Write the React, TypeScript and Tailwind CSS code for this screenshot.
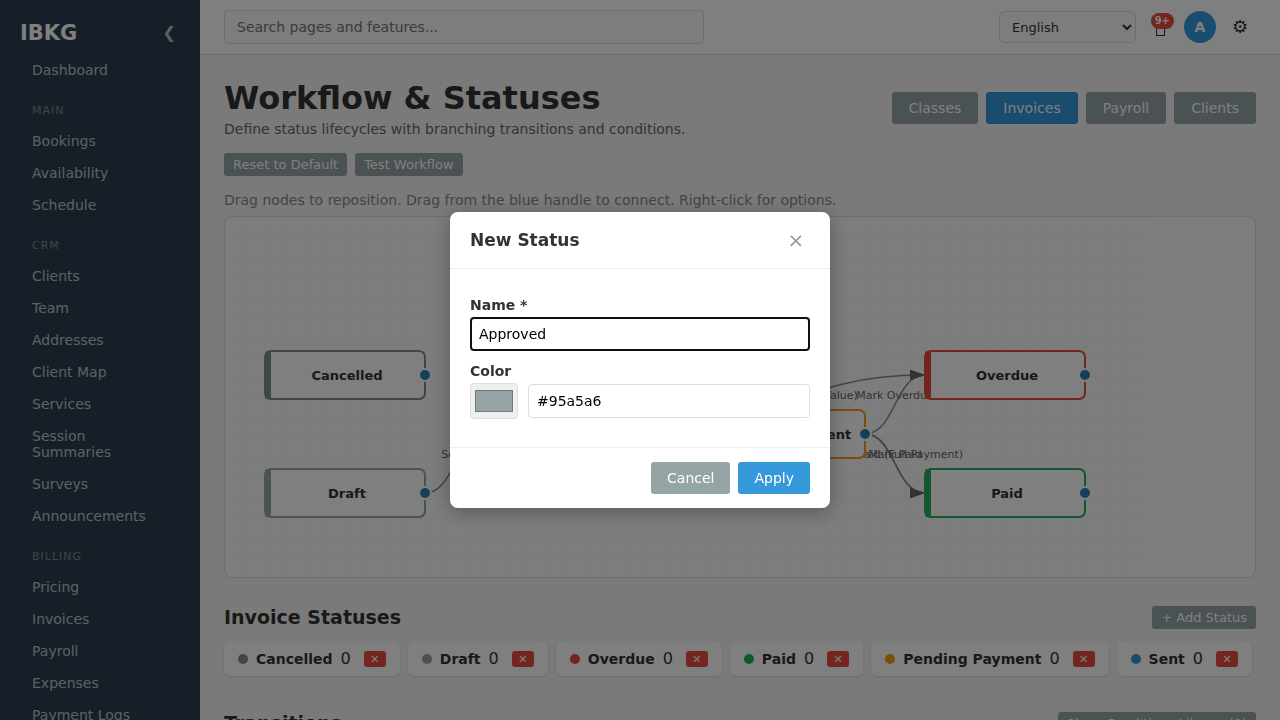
import { useState } from "react";

type Status = { name: string; color: string; count: number };
type FlowNode = { name: string; color: string; x: number; y: number };
type FlowEdge = {
  from: [number, number];
  to: [number, number];
  label: string;
};

const navSections = [
  { title: "", items: ["Dashboard"] },
  { title: "Main", items: ["Bookings", "Availability", "Schedule"] },
  {
    title: "CRM",
    items: [
      "Clients",
      "Team",
      "Addresses",
      "Client Map",
      "Services",
      "Session Summaries",
      "Surveys",
      "Announcements",
    ],
  },
  {
    title: "Billing",
    items: ["Pricing", "Invoices", "Payroll", "Expenses", "Payment Logs"],
  },
];

const tabs = ["Classes", "Invoices", "Payroll", "Clients"];

const statuses: Status[] = [
  { name: "Cancelled", color: "#7f8c8d", count: 0 },
  { name: "Draft", color: "#95a5a6", count: 0 },
  { name: "Overdue", color: "#e74c3c", count: 0 },
  { name: "Paid", color: "#27ae60", count: 0 },
  { name: "Pending Payment", color: "#f39c12", count: 0 },
  { name: "Sent", color: "#3498db", count: 0 },
];

const NODE_W = 160;
const NODE_H = 48;

const nodes: FlowNode[] = [
  { name: "Cancelled", color: "#7f8c8d", x: 40, y: 134 },
  { name: "Draft", color: "#95a5a6", x: 40, y: 252 },
  { name: "Sent", color: "#3498db", x: 260, y: 193 },
  { name: "Pending Payment", color: "#f39c12", x: 480, y: 193 },
  { name: "Overdue", color: "#e74c3c", x: 700, y: 134 },
  { name: "Paid", color: "#27ae60", x: 700, y: 252 },
];

const edges: FlowEdge[] = [
  { from: [200, 276], to: [260, 217], label: "Send" },
  { from: [420, 217], to: [700, 158], label: "Mark Overdue (Due Value)" },
  { from: [640, 217], to: [700, 158], label: "Mark Overdue" },
  { from: [640, 217], to: [700, 276], label: "Mark Paid" },
  { from: [640, 217], to: [700, 276], label: "Mark Paid (Full Payment)" },
];

function Sidebar() {
  return (
    <aside className="w-[200px] shrink-0 overflow-hidden bg-[#2c3e50] text-[#bdc3c7]">
      <div className="flex h-[54px] items-center justify-between pl-5 pr-6 pt-3">
        <span className="text-[21px] leading-6 font-bold text-white">IBKG</span>
        <button type="button" aria-label="Collapse sidebar" className="text-base leading-5">
          ❮
        </button>
      </div>
      <nav>
        {navSections.map((section) => (
          <div key={section.title}>
            {section.title && (
              <h3 className="px-8 pb-[7px] pt-[17px] text-[11px] leading-[15px] tracking-[1px] text-[#7f8c8d] uppercase">
                {section.title}
              </h3>
            )}
            <ul>
              {section.items.map((item) => (
                <li key={item}>
                  <a href="#" className="block py-2 pl-8 pr-10 text-sm leading-4">
                    {item}
                  </a>
                </li>
              ))}
            </ul>
          </div>
        ))}
      </nav>
    </aside>
  );
}

function TopBar() {
  return (
    <header className="flex h-[55px] shrink-0 items-center justify-between border-b border-[#ddd] bg-white px-6">
      <input
        type="search"
        aria-label="Search"
        placeholder="Search pages and features..."
        className="h-[34px] w-[480px] rounded border border-[#ddd] bg-[#fafafa] px-3 text-sm placeholder:text-[#757575]"
      />
      <div className="flex items-center">
        <select
          aria-label="Language"
          className="h-8 w-[137px] rounded-md border border-[#ddd] bg-[#fafafa] px-2 text-[13px] text-[#333]"
        >
          <option>English</option>
          <option>Français</option>
        </select>
        <button
          type="button"
          aria-label="Notifications"
          className="relative flex h-8 w-12 items-end justify-center pb-[7px]"
        >
          <span className="h-[14px] w-[9px] border border-[#333]" />
          <span className="absolute right-[10px] top-[2px] rounded-full bg-[#e74c3c] px-1 text-[10px] leading-4 font-bold text-white">
            9+
          </span>
        </button>
        <button
          type="button"
          aria-label="Account"
          className="size-8 rounded-full bg-[#3498db] text-sm font-bold text-white"
        >
          A
        </button>
        <button type="button" aria-label="Settings" className="ml-2 w-8 text-lg">
          ⚙
        </button>
      </div>
    </header>
  );
}

function SmallButton({ children }: { children: React.ReactNode }) {
  return (
    <button
      type="button"
      className="rounded-[3px] bg-[#95a5a6] px-[9px] py-1 text-[13px] leading-[15px] text-white"
    >
      {children}
    </button>
  );
}

function FlowCanvas() {
  return (
    <div className="mt-2 overflow-hidden rounded-lg border border-[#ddd] bg-[#fafafa]">
      <svg width="920" height="360" className="block">
        <defs>
          <pattern id="grid" width="20" height="20" patternUnits="userSpaceOnUse">
            <path d="M 20 0 L 0 0 0 20" fill="none" stroke="#f0f0f0" strokeWidth="1" />
          </pattern>
          <marker
            id="arrow"
            markerWidth="10"
            markerHeight="7"
            refX="10"
            refY="3.5"
            orient="auto"
          >
            <polygon points="0 0, 10 3.5, 0 7" fill="#666" />
          </marker>
        </defs>
        <rect width="920" height="360" fill="url(#grid)" />
        {edges.map(({ from, to, label }) => {
          const midX = (from[0] + to[0]) / 2;
          const midY = (from[1] + to[1]) / 2;
          return (
            <g key={`${label}-${from[0]}`}>
              <path
                d={`M ${from[0]} ${from[1]} C ${midX} ${from[1]}, ${midX} ${to[1]}, ${to[0]} ${to[1]}`}
                fill="none"
                stroke="#888"
                strokeWidth="1.5"
                markerEnd="url(#arrow)"
              />
              <text x={midX} y={midY - 6} textAnchor="middle" fontSize="11" fill="#666">
                {label}
              </text>
            </g>
          );
        })}
        {nodes.map((node) => (
          <g key={node.name}>
            <rect
              x={node.x}
              y={node.y}
              width={NODE_W}
              height={NODE_H}
              rx="6"
              fill="#fff"
              stroke={node.color}
              strokeWidth="2"
            />
            <rect x={node.x} y={node.y} width="6" height={NODE_H} rx="2" fill={node.color} />
            <text
              x={node.x + NODE_W / 2 + 2}
              y={node.y + NODE_H / 2 + 5}
              textAnchor="middle"
              fontSize="13"
              fontWeight="bold"
              fill="#333"
            >
              {node.name}
            </text>
            <circle
              cx={node.x + NODE_W}
              cy={node.y + NODE_H / 2}
              r="6"
              fill="#2980b9"
              stroke="#fff"
              strokeWidth="2"
            />
          </g>
        ))}
      </svg>
    </div>
  );
}

function StatusCard({ status }: { status: Status }) {
  return (
    <li className="flex h-[35px] items-center gap-2 rounded-md bg-white px-[14px] shadow-sm">
      <span
        className="size-[10px] rounded-full"
        style={{ backgroundColor: status.color }}
      />
      <span className="text-sm font-bold">{status.name}</span>
      <span className="text-base">{status.count}</span>
      <button
        type="button"
        aria-label={`Delete ${status.name}`}
        className="ml-[5px] h-4 w-[22px] rounded-[3px] bg-[#e74c3c] pt-px text-[11px] leading-[15px] text-white"
      >
        ✕
      </button>
    </li>
  );
}

function NewStatusDialog({ onClose }: { onClose: () => void }) {
  const [name, setName] = useState("Approved");
  const [color, setColor] = useState("#95a5a6");

  return (
    <div className="fixed inset-0 z-10 flex items-center justify-center bg-black/50">
      <form
        role="dialog"
        aria-labelledby="dialog-title"
        className="w-[380px] rounded-lg bg-white shadow-[0_4px_20px_rgba(0,0,0,0.3)]"
        onSubmit={(event) => {
          event.preventDefault();
          onClose();
        }}
      >
        <div className="flex h-[57px] items-center justify-between border-b border-[#eee] px-5">
          <h2 id="dialog-title" className="text-[17px] leading-5 font-bold">
            New Status
          </h2>
          <button
            type="button"
            aria-label="Close"
            className="w-7 text-xl leading-7 text-[#999]"
            onClick={onClose}
          >
            ×
          </button>
        </div>
        <div className="px-5 pb-7 pt-7">
          <label htmlFor="status-name" className="mb-1 block text-sm leading-4 font-bold">
            Name *
          </label>
          <input
            id="status-name"
            type="text"
            required
            value={name}
            onChange={(event) => setName(event.target.value)}
            className="h-[34px] w-full rounded border-2 border-[#101010] px-[7px] text-sm text-black"
          />
          <label htmlFor="status-color" className="mb-1 mt-3 block text-sm leading-4 font-bold">
            Color
          </label>
          <div className="flex items-center gap-[10px]">
            <input
              id="status-color"
              type="color"
              value={color}
              onChange={(event) => setColor(event.target.value)}
              className="h-9 w-12 rounded border border-[#ddd] bg-[#efefef] p-0.5"
            />
            <input
              type="text"
              aria-label="Color hex value"
              value={color}
              onChange={(event) => setColor(event.target.value)}
              className="h-[34px] min-w-0 flex-1 rounded border border-[#ddd] px-2 text-sm text-black"
            />
          </div>
        </div>
        <div className="flex justify-end gap-2 border-t border-[#eee] px-5 py-[14px]">
          <button
            type="button"
            className="h-8 rounded-[3px] bg-[#95a5a6] px-4 text-sm text-white"
            onClick={onClose}
          >
            Cancel
          </button>
          <button type="submit" className="h-8 rounded-[3px] bg-[#3498db] px-4 text-sm text-white">
            Apply
          </button>
        </div>
      </form>
    </div>
  );
}

export default function App() {
  const [activeTab, setActiveTab] = useState("Invoices");
  const [dialogOpen, setDialogOpen] = useState(true);

  return (
    <div className="flex h-screen overflow-hidden bg-[#f5f5f5] font-['DejaVu_Sans',sans-serif] text-[#333]">
      <Sidebar />
      <div className="flex min-w-0 flex-1 flex-col">
        <TopBar />
        <main className="min-h-0 flex-1 overflow-hidden p-6">
          <div className="flex items-center justify-between">
            <div>
              <h1 className="text-[32px] leading-[38px] font-bold">Workflow & Statuses</h1>
              <p className="mt-1 text-sm leading-4 text-[#666]">
                Define status lifecycles with branching transitions and conditions.
              </p>
            </div>
            <div className="flex gap-2">
              {tabs.map((tab) => (
                <button
                  key={tab}
                  type="button"
                  onClick={() => setActiveTab(tab)}
                  className={`h-8 rounded-[3px] px-[17px] text-sm text-white ${
                    tab === activeTab ? "bg-[#3498db]" : "bg-[#95a5a6]"
                  }`}
                >
                  {tab}
                </button>
              ))}
            </div>
          </div>

          <div className="mt-4 flex gap-2">
            <SmallButton>Reset to Default</SmallButton>
            <SmallButton>Test Workflow</SmallButton>
          </div>

          <p className="mt-4 text-sm leading-4 text-[#888]">
            Drag nodes to reposition. Drag from the blue handle to connect. Right-click for
            options.
          </p>
          <FlowCanvas />

          <div className="mt-7 flex items-center justify-between">
            <h2 className="text-[19px] leading-[23px] font-bold">Invoice Statuses</h2>
            <SmallButton>+ Add Status</SmallButton>
          </div>
          <ul className="mt-3 flex flex-wrap gap-2">
            {statuses.map((status) => (
              <StatusCard key={status.name} status={status} />
            ))}
          </ul>

          <div className="mt-9 flex items-center justify-between">
            <h2 className="text-[19px] leading-[23px] font-bold">Transitions</h2>
            <SmallButton>Show Conditions Library (0)</SmallButton>
          </div>
        </main>
      </div>
      {dialogOpen && <NewStatusDialog onClose={() => setDialogOpen(false)} />}
    </div>
  );
}
